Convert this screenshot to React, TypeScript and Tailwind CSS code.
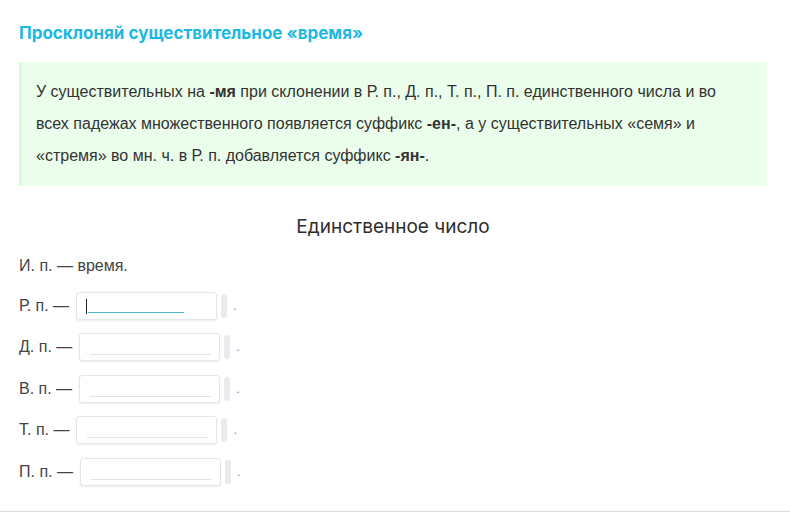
import React from "react";

const rows = [
  { label: "Р. п. —", focused: true },
  { label: "Д. п. —" },
  { label: "В. п. —" },
  { label: "Т. п. —" },
  { label: "П. п. —" },
];

function Blank({ focused }: { focused?: boolean }) {
  return (
    <div className="flex items-center">
      <div className="relative h-[28px] w-[141px] rounded-[3px] border border-[#e6e6e2] bg-white shadow-[0_1px_2px_rgba(0,0,0,0.08)]">
        {focused ? (
          <>
            <span className="absolute left-[9px] top-[6px] h-[15px] w-px bg-[#222]" />
            <span className="absolute left-[11px] top-[19px] h-px w-[96px] bg-[#4fb8c4]" />
          </>
        ) : (
          <span className="absolute left-[10px] right-[8px] top-[20px] h-px bg-[#e2e2e2]" />
        )}
      </div>
      <span className="ml-[4px] h-[24px] w-[6px] rounded-[3px] bg-[#e9ebee]" />
      <span className="ml-[6px] text-[13px] text-[#888]">.</span>
    </div>
  );
}

export default function App() {
  return (
    <div
      className="w-[790px] border-b border-[#dcdcdc] bg-white pb-[25px]"
      style={{ fontFamily: '"Liberation Sans", Arial, sans-serif' }}
    >
      <div className="pl-[19px] pr-[23px] pt-[21px]">
        <h1 className="font-['Inter',sans-serif] text-[17px] font-bold leading-[24px] text-[#1cb9e4]">
          Просклоняй существительное «время»
        </h1>

        <div className="mt-[17px] border-l-[3px] border-[#dcf5dc] bg-[#ebfdeb] py-[14px] pl-[14px] pr-[20px] text-[16px] leading-[32px] text-[#333]">
          У существительных на <b>-мя</b> при склонении в Р. п., Д. п., Т. п., П. п. единственного числа и во всех
          падежах множественного появляется суффикс <b>-ен-</b>, а у существительных «семя» и «стремя» во мн. ч. в Р. п.
          добавляется суффикс <b>-ян-</b>.
        </div>

        <h2 className="mt-[27px] text-center font-['Inter',sans-serif] text-[19px] font-normal leading-[28px] text-[#2d2d2d]">
          Единственное число
        </h2>

        <div className="mt-[13px] flex flex-col gap-[13.5px] text-[16px] text-[#444]">
          <div className="leading-[24px]">И. п. — время.</div>
          {rows.map((r) => (
            <div key={r.label} className="flex items-center gap-[7px]">
              <span className="leading-[28px]">{r.label}</span>
              <Blank focused={r.focused} />
            </div>
          ))}
        </div>
      </div>
    </div>
  );
}
